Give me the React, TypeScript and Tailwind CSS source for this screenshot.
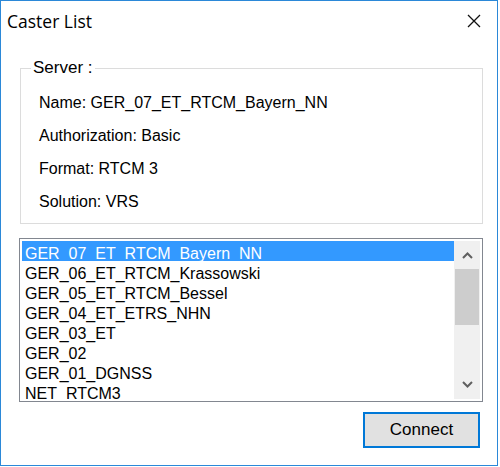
const SERVER_INFO = [
  { label: "Name", value: "GER_07_ET_RTCM_Bayern_NN" },
  { label: "Authorization", value: "Basic" },
  { label: "Format", value: "RTCM 3" },
  { label: "Solution", value: "VRS" },
];

const CASTERS = [
  "GER_07_ET_RTCM_Bayern_NN",
  "GER_06_ET_RTCM_Krassowski",
  "GER_05_ET_RTCM_Bessel",
  "GER_04_ET_ETRS_NHN",
  "GER_03_ET",
  "GER_02",
  "GER_01_DGNSS",
  "NET_RTCM3",
];

function Chevron({ up }: { up?: boolean }) {
  return (
    <svg width="11" height="7" viewBox="0 0 11 7" className="text-[#606060]">
      <path
        d={up ? "M1 6 L5.5 1.5 L10 6" : "M1 1 L5.5 5.5 L10 1"}
        fill="none"
        stroke="currentColor"
        strokeWidth="2"
      />
    </svg>
  );
}

export default function App() {
  return (
    <div className="w-[500px] h-[467px] bg-white">
      <div className="w-[498px] h-[466px] border border-[#2b88d8] flex flex-col text-black font-['Liberation_Sans',Arial,sans-serif]">
        {/* Title bar */}
        <div className="h-[40px] flex items-center justify-between pl-[6px] pr-[16px]">
          <span className="text-[17.5px] font-['Open_Sans','Liberation_Sans',sans-serif]">
            Caster List
          </span>
          <svg width="14" height="14" viewBox="0 0 14 14">
            <path d="M1 1 L13 13 M13 1 L1 13" stroke="#111" strokeWidth="1.3" />
          </svg>
        </div>

        {/* Server group */}
        <fieldset className="mt-[18px] ml-[19px] w-[463px] h-[165px] border border-[#dcdcdc]">
          <legend className="ml-[10px] px-[2px] text-[17px] leading-[18px]">Server :</legend>
          <div className="flex flex-col gap-[13px] pt-[16px] pl-[18px]">
            {SERVER_INFO.map((r) => (
              <div key={r.label} className="text-[16px] leading-[20px]">
                {r.label}: {r.value}
              </div>
            ))}
          </div>
        </fieldset>

        {/* Caster list */}
        <div className="mt-[14px] ml-[18px] w-[464px] h-[164px] border border-[#828790] flex p-[2px]">
          <div className="flex-1 overflow-hidden">
            {CASTERS.map((c, i) => (
              <div
                key={c}
                className={`h-[20px] pt-[4px] leading-[17px] pl-[3px] text-[16px] ${
                  i === 0 ? "bg-[#3399ff] text-white" : ""
                }`}
              >
                {c}
              </div>
            ))}
          </div>
          <div className="w-[26px] bg-[#f0f0f0] flex flex-col">
            <div className="h-[28px] flex items-center justify-center">
              <Chevron up />
            </div>
            <div className="h-[56px] bg-[#cdcdcd] mx-[1px]" />
            <div className="flex-1" />
            <div className="h-[30px] flex items-center justify-center">
              <Chevron />
            </div>
          </div>
        </div>

        {/* Footer */}
        <div className="flex justify-end pr-[17px] mt-[10px]">
          <button className="w-[117px] h-[36px] border-2 border-[#0078d7] bg-[#e1e1e1] text-[17px]">
            Connect
          </button>
        </div>
      </div>
    </div>
  );
}
